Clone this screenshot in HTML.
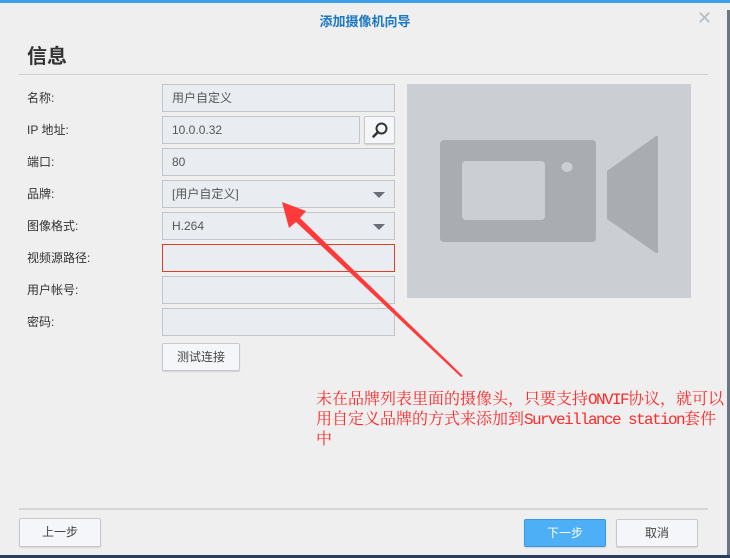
<!DOCTYPE html>
<html><head><meta charset="utf-8"><style>
*{box-sizing:border-box;margin:0;padding:0}
body{width:730px;height:558px;overflow:hidden;background:#efefef;position:relative;font-family:"Liberation Sans","Noto Sans CJK SC",sans-serif;color:#333}
.a{position:absolute}
.lbl{position:absolute;left:27px;font-size:12px;color:#333;line-height:14px}
.f{position:absolute;left:162px;width:233px;height:28px;background:#e9edf1;border:1px solid #c3c5c8;font-size:12px;padding-left:9px;line-height:26px;color:#555}
.dd::after{content:"";position:absolute;right:9px;top:11px;border-left:6px solid transparent;border-right:6px solid transparent;border-top:6px solid #6b7078}
.btn{position:absolute;height:28px;background:#f4f6f9;border:1px solid #c8c9cb;border-radius:2px;box-shadow:0 1px 1px rgba(0,0,0,.12);font-size:12px;text-align:center;line-height:26px;color:#444}
.red{position:absolute;left:316px;color:#ff2a2a;font-size:16px;line-height:20px;font-family:"Noto Serif CJK SC","Noto Sans CJK SC",serif;white-space:nowrap}
.red span{font-family:"Liberation Mono",monospace;font-size:16px;letter-spacing:-1.6px}
</style></head><body>
<div class="a" style="left:0;top:0;width:730px;height:3px;background:#3aa0e8"></div>
<div class="a" style="left:727px;top:10px;width:3px;height:548px;background:#6b7684"></div>
<div class="a" style="left:0;top:555px;width:730px;height:3px;background:#2a3f5e"></div>
<div class="a" style="left:0;top:11px;width:730px;text-align:center;font-size:13px;color:#1b78c2;font-weight:bold">添加摄像机向导</div>
<div class="a" style="left:697px;top:9px;font-size:18px;color:#b4bcc6;line-height:18px">✕</div>
<div class="a" style="left:27px;top:40px;font-size:20px;font-weight:bold;color:#333">信息</div>
<div class="a" style="left:19px;top:74px;width:689px;height:1px;background:#cfcfcf"></div>

<div class="lbl" style="top:91px">名称:</div>
<div class="lbl" style="top:123px">IP 地址:</div>
<div class="lbl" style="top:155px">端口:</div>
<div class="lbl" style="top:187px">品牌:</div>
<div class="lbl" style="top:219px">图像格式:</div>
<div class="lbl" style="top:251px">视频源路径:</div>
<div class="lbl" style="top:283px">用户帐号:</div>
<div class="lbl" style="top:315px">密码:</div>

<div class="f" style="top:84px">用户自定义</div>
<div class="f" style="top:116px;width:198px">10.0.0.32</div>
<div class="btn" style="left:364px;top:116px;width:31px;height:28px;padding-top:4px"><svg width="18" height="18" viewBox="0 0 18 18"><circle cx="10.5" cy="7.5" r="5" fill="none" stroke="#333" stroke-width="2"/><line x1="7" y1="11" x2="2.5" y2="15.5" stroke="#333" stroke-width="2.6" stroke-linecap="round"/></svg></div>
<div class="f" style="top:148px">80</div>
<div class="f dd" style="top:180px">[用户自定义]</div>
<div class="f dd" style="top:212px">H.264</div>
<div class="f" style="top:244px;border-color:#d9412b"></div>
<div class="f" style="top:276px"></div>
<div class="f" style="top:308px"></div>
<div class="btn" style="left:162px;top:343px;width:78px;height:28px">测试连接</div>

<div class="a" style="left:407px;top:84px;width:284px;height:214px;background:#cbced2"></div>
<svg class="a" style="left:407px;top:84px" width="284" height="214" viewBox="407 84 284 214">
<rect x="440" y="140" width="156" height="102" rx="4" fill="#a9acb0"/>
<rect x="462" y="161" width="83" height="59" rx="4" fill="#cbced2"/>
<ellipse cx="567" cy="167" rx="5.5" ry="5" fill="#cbced2"/>
<polygon points="607,171 656,136 658,136 658,253 656,253 607,219" fill="#a9acb0"/>
</svg>

<svg class="a" style="left:0;top:0" width="730" height="558">
<polygon points="282,202 306,211 300,218 463,376 461,377 296,222 289,228" fill="#ff3a3a"/>
</svg>

<div class="red" style="top:388px">未在品牌列表里面的摄像头，只要支持<span>ONVIF</span>协议，就可以</div>
<div class="red" style="top:408px">用自定义品牌的方式来添加到<span>Surveillance station</span>套件</div>
<div class="red" style="top:428px">中</div>

<div class="a" style="left:19px;top:508px;width:689px;height:2px;background:#d5d5d5"></div>
<div class="btn" style="left:19px;top:518px;width:82px;height:29px;line-height:27px">上一步</div>
<div class="btn" style="left:524px;top:519px;width:82px;height:28px;background:#4daff6;border-color:#3a98e0;color:#fff">下一步</div>
<div class="btn" style="left:616px;top:519px;width:82px;height:28px">取消</div>
</body></html>
